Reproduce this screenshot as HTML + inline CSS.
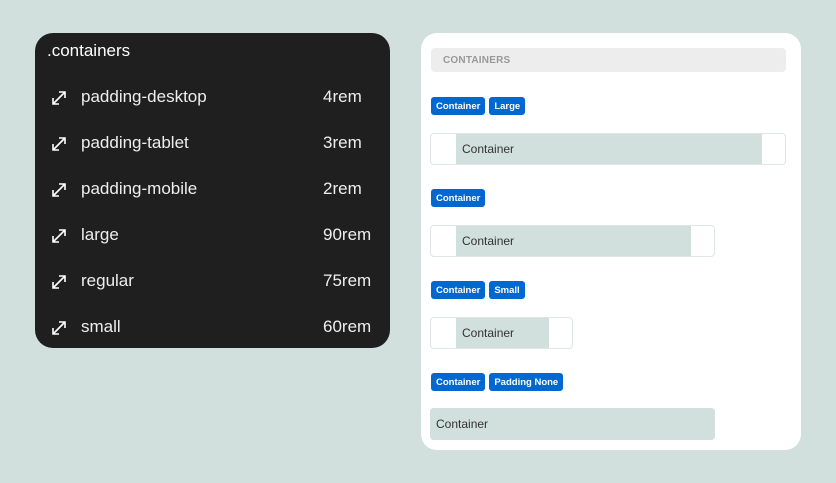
<!DOCTYPE html>
<html><head><style>
*{margin:0;padding:0;box-sizing:border-box}
body{width:836px;height:483px;background:#d1e0dc;position:relative;font-family:"Liberation Sans",sans-serif;overflow:hidden}
.dark{position:absolute;left:35px;top:33px;width:355px;height:315px;background:#1f1f1f;border-radius:18px;color:#eee}
.title{position:absolute;left:12px;top:8px;font-size:17px;color:#fff}
.row{position:absolute;left:0;width:355px;height:24px;font-size:17px}
.row svg{position:absolute;left:15px;top:4px}
.row .l{position:absolute;left:46px;top:2px}
.row .v{position:absolute;left:288px;top:2px}
.card{position:absolute;left:421px;top:33px;width:380px;height:417px;background:#fff;border-radius:16px}
.hd{position:absolute;left:10px;top:15px;width:355px;height:24px;background:#ededed;border-radius:4px;font-size:10px;font-weight:bold;color:#999;padding:7px 12px;letter-spacing:.2px}
.tags{position:absolute;left:10px;height:18px;display:flex}
.tag{display:flex;align-items:center;height:18px;background:#0068d0;color:#fff;font-size:9.5px;font-weight:bold;padding:0 5px;border-radius:3px;margin-right:4px}
.box{position:absolute;left:9px;height:32px;border:1px solid #dfe6e4;border-radius:4px;background:#fff}
.in{position:absolute;top:0;bottom:0;left:25px;background:#d1e0dc;font-size:12px;color:#333;line-height:30px;padding-left:6px}
</style></head><body>
<div class="dark">
<div class="title">.containers</div>
<div class="row" style="top:52px"><svg width="18" height="18" viewBox="0 0 18 18" fill="none" stroke="#fff" stroke-width="1.6"><path d="M3 15L15 3M9 3h6v6M3 9v6h6"/></svg><span class="l">padding-desktop</span><span class="v">4rem</span></div>
<div class="row" style="top:98px"><svg width="18" height="18" viewBox="0 0 18 18" fill="none" stroke="#fff" stroke-width="1.6"><path d="M3 15L15 3M9 3h6v6M3 9v6h6"/></svg><span class="l">padding-tablet</span><span class="v">3rem</span></div>
<div class="row" style="top:144px"><svg width="18" height="18" viewBox="0 0 18 18" fill="none" stroke="#fff" stroke-width="1.6"><path d="M3 15L15 3M9 3h6v6M3 9v6h6"/></svg><span class="l">padding-mobile</span><span class="v">2rem</span></div>
<div class="row" style="top:190px"><svg width="18" height="18" viewBox="0 0 18 18" fill="none" stroke="#fff" stroke-width="1.6"><path d="M3 15L15 3M9 3h6v6M3 9v6h6"/></svg><span class="l">large</span><span class="v">90rem</span></div>
<div class="row" style="top:236px"><svg width="18" height="18" viewBox="0 0 18 18" fill="none" stroke="#fff" stroke-width="1.6"><path d="M3 15L15 3M9 3h6v6M3 9v6h6"/></svg><span class="l">regular</span><span class="v">75rem</span></div>
<div class="row" style="top:282px"><svg width="18" height="18" viewBox="0 0 18 18" fill="none" stroke="#fff" stroke-width="1.6"><path d="M3 15L15 3M9 3h6v6M3 9v6h6"/></svg><span class="l">small</span><span class="v">60rem</span></div>
</div>
<div class="card">
<div class="hd">CONTAINERS</div>
<div class="tags" style="top:64px"><span class="tag">Container</span><span class="tag">Large</span></div>
<div class="box" style="top:100px;width:356px"><div class="in" style="width:306px">Container</div></div>
<div class="tags" style="top:156px"><span class="tag">Container</span></div>
<div class="box" style="top:192px;width:285px"><div class="in" style="width:235px">Container</div></div>
<div class="tags" style="top:248px"><span class="tag">Container</span><span class="tag">Small</span></div>
<div class="box" style="top:284px;width:143px"><div class="in" style="width:93px">Container</div></div>
<div class="tags" style="top:340px"><span class="tag">Container</span><span class="tag">Padding None</span></div>
<div class="box" style="top:375px;width:285px;border:none;background:#d1e0dc;border-radius:4px"><div class="in" style="left:0;right:0;line-height:32px;border-radius:4px">Container</div></div>
</div>
</body></html>
